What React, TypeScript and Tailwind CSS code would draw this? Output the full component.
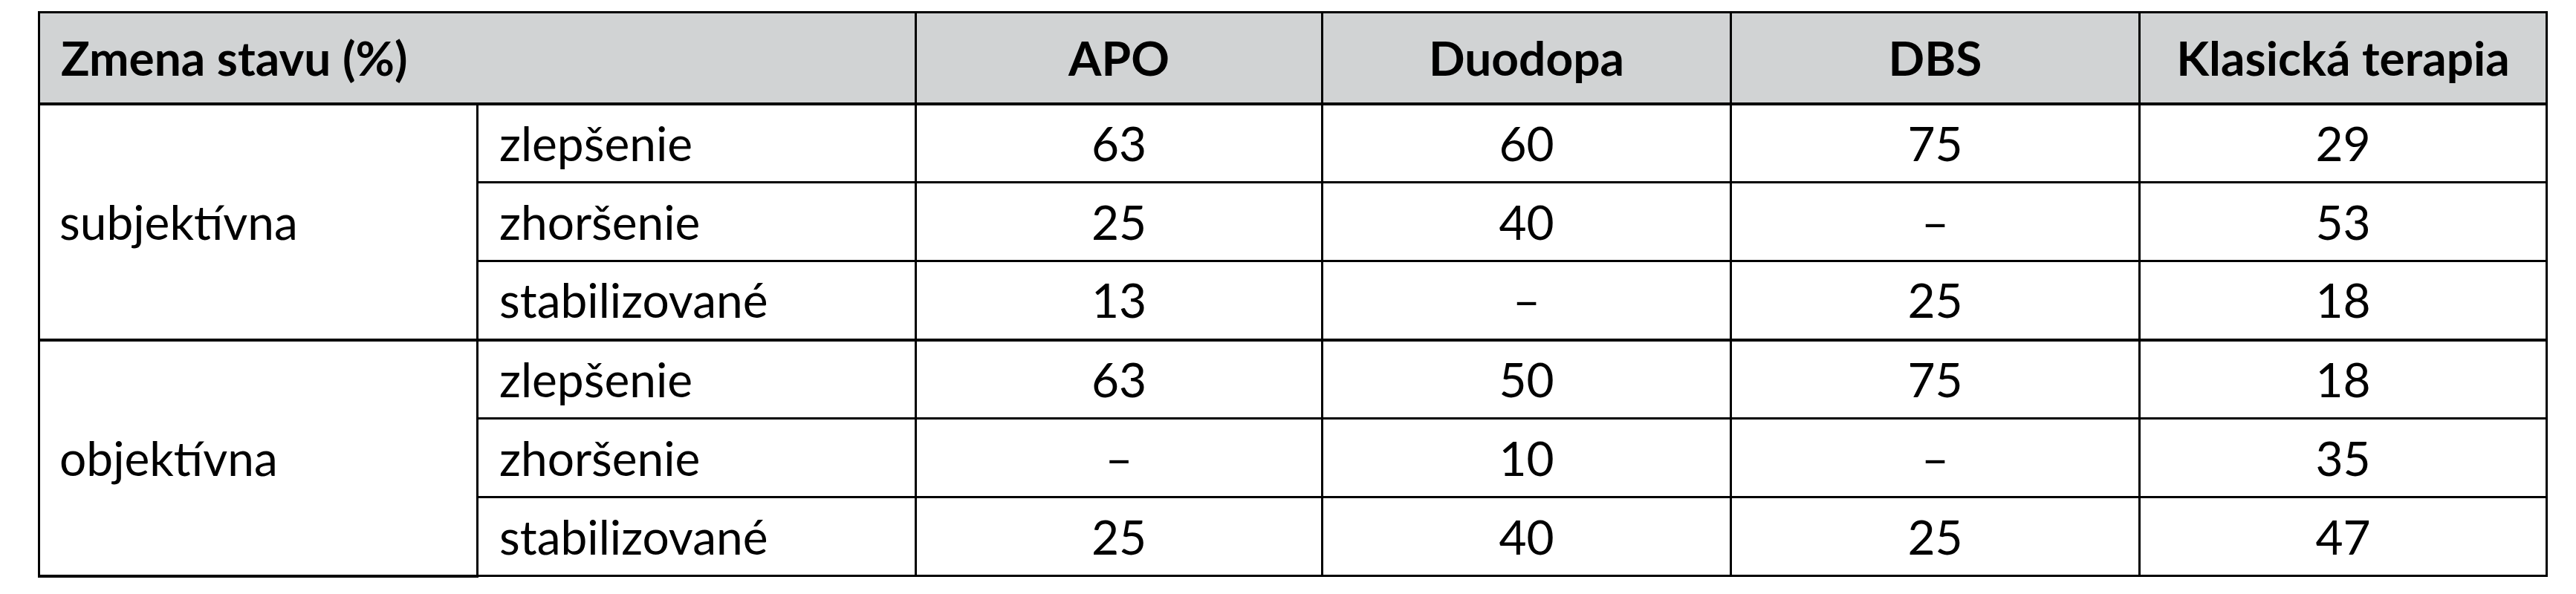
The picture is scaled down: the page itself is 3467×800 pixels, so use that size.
import React from "react";

type Row = {
  label: string;
  values: string[];
};

type Group = {
  name: string;
  rows: Row[];
};

const groups: Group[] = [
  {
    name: "subjektívna",
    rows: [
      { label: "zlepšenie", values: ["63", "60", "75", "29"] },
      { label: "zhoršenie", values: ["25", "40", "–", "53"] },
      { label: "stabilizované", values: ["13", "–", "25", "18"] },
    ],
  },
  {
    name: "objektívna",
    rows: [
      { label: "zlepšenie", values: ["63", "50", "75", "18"] },
      { label: "zhoršenie", values: ["–", "10", "–", "35"] },
      { label: "stabilizované", values: ["25", "40", "25", "47"] },
    ],
  },
];

const therapies = ["APO", "Duodopa", "DBS", "Klasická terapia"];

export default function App() {
  return (
    <div className="min-h-[800px] w-[3467px] bg-white pt-[15px] pl-[51px] font-['Lato','Liberation_Sans',sans-serif] text-black">
      <table className="w-[3375px] table-fixed border-collapse text-[64px] leading-none">
        <colgroup>
          <col className="w-[590px]" />
          <col className="w-[590px]" />
          <col className="w-[547px]" />
          <col className="w-[550px]" />
          <col className="w-[550px]" />
          <col className="w-[548px]" />
        </colgroup>
        <thead>
          <tr className="h-[123px] bg-[#d1d3d4]">
            <th
              colSpan={2}
              className="border-x-[3px] border-t-[3px] border-b-[4px] border-black pl-[28px] text-left font-bold"
            >
              Zmena stavu (%)
            </th>
            {therapies.map((t) => (
              <th
                key={t}
                className="border-x-[3px] border-t-[3px] border-b-[4px] border-black text-center font-bold"
              >
                {t}
              </th>
            ))}
          </tr>
        </thead>
        <tbody>
          {groups.map((group) =>
            group.rows.map((row, i) => (
              <tr
                key={group.name + row.label}
                className={
                  i === 0
                    ? "h-[106px] border-t-[4px] border-black"
                    : "h-[106px]"
                }
              >
                {i === 0 && (
                  <td
                    rowSpan={3}
                    className="border-x-[3px] border-t-[4px] border-b-[4px] border-black pl-[26px] align-middle"
                  >
                    {group.name}
                  </td>
                )}
                <td className="border-[3px] border-black pl-[28px] align-middle">
                  {row.label}
                </td>
                {row.values.map((v, j) => (
                  <td
                    key={j}
                    className="border-[3px] border-black text-center align-middle"
                  >
                    {v}
                  </td>
                ))}
              </tr>
            ))
          )}
        </tbody>
      </table>
    </div>
  );
}
